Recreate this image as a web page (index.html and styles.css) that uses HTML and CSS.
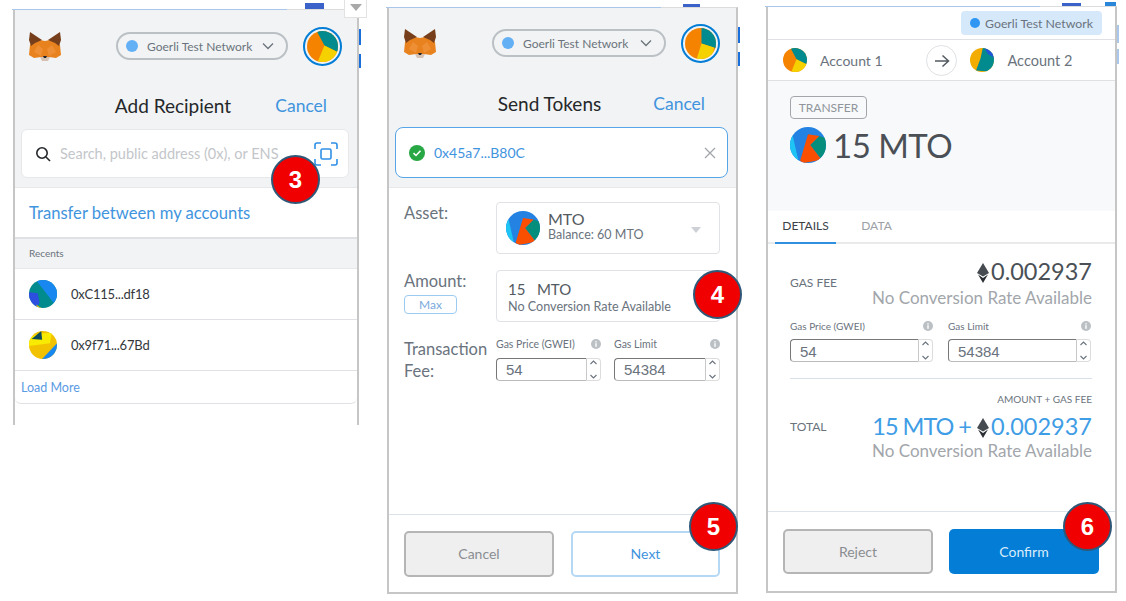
FILE: index.html
```html
<!DOCTYPE html>
<html>
<head>
	<title>MetaMask Send Steps</title>
	<link rel="stylesheet" href="styles.css">
</head>
<body>
	<svg class="defs" width="0" height="0">
		<symbol id="fox" viewBox="0 0 32 30">
			<polygon fill="#e8821e" points="1,14 6,8 16,10 26,8 31,14 32,24 27,27 20,26 12,26 5,27 0,24"/>
			<polygon fill="#763e1a" points="1,1 13,9 6,12 2,15 0,9"/>
			<polygon fill="#763e1a" points="31,1 19,9 26,12 30,15 32,9"/>
			<polygon fill="#ef8f35" points="9,14 14,18 12,25 5,21"/>
			<polygon fill="#ef8f35" points="23,14 18,18 20,25 27,21"/>
			<polygon fill="#d7c1b3" points="11,26 21,26 19,30 13,30"/>
			<polygon fill="#23262b" points="14,25 18,25 17,27 15,27"/>
		</symbol>
		<symbol id="chevron" viewBox="0 0 12 8">
			<path d="M1 1.5 L6 6.5 L11 1.5" fill="none" stroke="#6a737d" stroke-width="1.3"/>
		</symbol>
		<symbol id="pie-account" viewBox="0 0 32 32">
			<rect width="32" height="32" fill="#f58300"/>
			<polygon fill="#018b8e" points="10,0 32,0 32,22 18,15"/>
			<polygon fill="#f6d100" points="18,15 32,22 32,32 11,32"/>
		</symbol>
		<symbol id="pie-send" viewBox="0 0 32 32">
			<rect width="32" height="32" fill="#f58300"/>
			<polygon fill="#018b8e" points="17,0 32,0 32,21 17,16"/>
			<polygon fill="#f6d100" points="17,16 30,20 28,32 12,32"/>
		</symbol>
		<symbol id="pie-recent-a" viewBox="0 0 32 32">
			<rect width="32" height="32" fill="#018b8e"/>
			<polygon fill="#1888f0" points="8,0 32,0 32,24 28,26"/>
			<polygon fill="#2d4fe0" points="0,14 10,15 12,26 8,32 0,32"/>
			<polygon fill="#f2c200" points="0,0 8,0 0,10"/>
			<polygon fill="#f2c200" points="8,28 14,32 10,32"/>
		</symbol>
		<symbol id="pie-recent-b" viewBox="0 0 32 32">
			<rect width="32" height="32" fill="#f2c200"/>
			<polygon fill="#f8ea00" points="0,8 10,3 26,2 24,14 0,17"/>
			<polygon fill="#0f4a5a" points="3,9 14,0 15,10"/>
			<polygon fill="#1888f0" points="32,14 32,32 15,32"/>
		</symbol>
		<symbol id="pie-account-b" viewBox="0 0 32 32">
			<rect width="32" height="32" fill="#f2ad00"/>
			<polygon fill="#018b8e" points="17,0 32,0 32,32 8,30 14,14"/>
			<polygon fill="#1f55dc" points="19,0 32,0 32,13 24,8"/>
		</symbol>
		<symbol id="token" viewBox="0 0 32 32">
			<rect width="32" height="32" fill="#2382e2"/>
			<polygon fill="#1ec4f4" points="2,6 8,32 0,32 0,10"/>
			<polygon fill="#068e7c" points="18,16 26,8 32,10 32,32 28,29"/>
			<polygon fill="#fa4e00" points="16,6.5 26,8 18,16 28,29 12,32 9,30"/>
		</symbol>
		<symbol id="eth" viewBox="0 0 12 20">
			<polygon fill="#454b50" points="6,0 12,10 6,13.5 0,10"/>
			<polygon fill="#2b2f33" points="6,15 11,11.5 6,20 1,11.5"/>
		</symbol>
		<symbol id="info" viewBox="0 0 10 10">
			<circle cx="5" cy="5" r="5" fill="#bbc0c5"/>
			<rect x="4.3" y="4.2" width="1.4" height="3.6" fill="#fff"/>
			<rect x="4.3" y="2.2" width="1.4" height="1.3" fill="#fff"/>
		</symbol>
		<symbol id="spin" viewBox="0 0 9 21">
			<path d="M1.5 5 L4.5 2 L7.5 5 M1.5 16 L4.5 19 L7.5 16" fill="none" stroke="#6a737d" stroke-width="1.1"/>
		</symbol>
	</svg>

	<!-- page behind the popups -->
	<div class="scrap scrap-tag"></div>
	<div class="scrap scrap-side side-a"></div>
	<div class="scrap scrap-side side-b"></div>
	<div class="scrap scrap-tag tag-b"></div>
	<div class="scrap scrap-tag tag-c"></div>
	<div class="scrap scrap-tag tag-d"></div>
	<div class="scrap scrap-side side-c"></div>
	<div class="scrap-drop"><span></span></div>

	<!-- step 3 -->
	<section class="panel panel-recipient">
		<div class="top-area">
			<header class="app-bar">
				<svg class="fox"><use href="#fox"/></svg>
				<div class="network-pill">
					<span class="dot"></span>
					<span class="network-name">Goerli Test Network</span>
					<svg class="chevron"><use href="#chevron"/></svg>
				</div>
				<div class="avatar-ring"><svg class="pie"><use href="#pie-account"/></svg></div>
			</header>
			<div class="title-row">
				<h2>Add Recipient</h2>
				<a class="cancel-link">Cancel</a>
			</div>
			<div class="search-box">
				<svg class="search-icon" viewBox="0 0 16 16"><circle cx="7" cy="7" r="5.2" fill="none" stroke="#24272a" stroke-width="1.6"/><path d="M11 11 L15 15" stroke="#24272a" stroke-width="1.6"/></svg>
				<span class="search-text">Search, public address (0x), or ENS</span>
				<svg class="qr-icon" viewBox="0 0 24 24">
					<path d="M1 7 V3 a2 2 0 0 1 2 -2 H7 M17 1 H21 a2 2 0 0 1 2 2 V7 M23 17 V21 a2 2 0 0 1 -2 2 H17 M7 23 H3 a2 2 0 0 1 -2 -2 V17" fill="none" stroke="#2f8fe6" stroke-width="1.6"/>
					<rect x="7" y="7" width="10" height="10" rx="1.5" fill="none" stroke="#2f8fe6" stroke-width="1.6"/>
				</svg>
			</div>
		</div>
		<a class="transfer-link">Transfer between my accounts</a>
		<div class="recents-head">Recents</div>
		<div class="recent-row">
			<svg class="recent-pie"><use href="#pie-recent-a"/></svg>
			<span>0xC115...df18</span>
		</div>
		<div class="recent-row">
			<svg class="recent-pie"><use href="#pie-recent-b"/></svg>
			<span>0x9f71...67Bd</span>
		</div>
		<a class="load-more">Load More</a>
		<span class="badge badge-3">3</span>
	</section>

	<!-- steps 4 and 5 -->
	<section class="panel panel-send">
		<div class="top-area">
			<header class="app-bar">
				<svg class="fox"><use href="#fox"/></svg>
				<div class="network-pill">
					<span class="dot"></span>
					<span class="network-name">Goerli Test Network</span>
					<svg class="chevron"><use href="#chevron"/></svg>
				</div>
				<div class="avatar-ring"><svg class="pie"><use href="#pie-send"/></svg></div>
			</header>
			<div class="title-row">
				<h2>Send Tokens</h2>
				<a class="cancel-link">Cancel</a>
			</div>
			<div class="address-box">
				<svg class="check-icon" viewBox="0 0 16 16"><circle cx="8" cy="8" r="8" fill="#28a745"/><path d="M4.5 8.2 L7 10.5 L11.5 5.8" fill="none" stroke="#fff" stroke-width="1.6"/></svg>
				<span class="address-text">0x45a7...B80C</span>
				<svg class="close-icon" viewBox="0 0 12 12"><path d="M1 1 L11 11 M11 1 L1 11" stroke="#a2a6ab" stroke-width="1.3"/></svg>
			</div>
		</div>
		<div class="send-form">
			<div class="form-row">
				<label class="form-label">Asset:</label>
				<div class="field-box asset-box">
					<svg class="asset-icon"><use href="#token"/></svg>
					<div>
						<div class="asset-name">MTO</div>
						<div class="asset-balance">Balance: 60 MTO</div>
					</div>
					<span class="asset-caret"></span>
				</div>
			</div>
			<div class="form-row">
				<div>
					<label class="form-label">Amount:</label>
					<button class="max-button">Max</button>
				</div>
				<div class="field-box amount-box">
					<div class="amount-value">15&nbsp;&nbsp; MTO</div>
					<div class="amount-note">No Conversion Rate Available</div>
				</div>
			</div>
			<div class="form-row fee-row">
				<label class="form-label fee-label">Transaction Fee:</label>
				<div class="gas-fields">
					<div class="gas-field">
						<div class="gas-label"><span>Gas Price (GWEI)</span><svg class="info"><use href="#info"/></svg></div>
						<div class="gas-input"><span class="gas-value">54</span><span class="gas-spin"><svg><use href="#spin"/></svg></span></div>
					</div>
					<div class="gas-field">
						<div class="gas-label"><span>Gas Limit</span><svg class="info"><use href="#info"/></svg></div>
						<div class="gas-input"><span class="gas-value">54384</span><span class="gas-spin"><svg><use href="#spin"/></svg></span></div>
					</div>
				</div>
			</div>
		</div>
		<footer class="panel-footer">
			<button class="btn btn-grey">Cancel</button>
			<button class="btn btn-outline">Next</button>
		</footer>
		<span class="badge badge-4">4</span>
		<span class="badge badge-5">5</span>
	</section>

	<!-- step 6 -->
	<section class="panel panel-confirm">
		<div class="network-bar">
			<div class="network-chip"><span class="dot"></span>Goerli Test Network</div>
		</div>
		<div class="account-row">
			<div class="account account-from">
				<svg class="account-pie"><use href="#pie-account"/></svg>
				<span>Account 1</span>
			</div>
			<div class="account account-to">
				<svg class="account-pie"><use href="#pie-account-b"/></svg>
				<span>Account 2</span>
			</div>
			<div class="arrow-circle">
				<svg viewBox="0 0 16 14"><path d="M1 7 H14 M8.5 1.5 L14.5 7 L8.5 12.5" fill="none" stroke="#535a61" stroke-width="1.5"/></svg>
			</div>
		</div>
		<div class="summary">
			<span class="transfer-tag">TRANSFER</span>
			<div class="summary-amount">
				<svg class="summary-icon"><use href="#token"/></svg>
				<span>15 MTO</span>
			</div>
		</div>
		<nav class="tabs">
			<a class="tab tab-active">DETAILS</a>
			<a class="tab">DATA</a>
		</nav>
		<div class="details">
			<div class="detail-row gas-row">
				<span class="detail-label">GAS FEE</span>
				<div class="detail-values">
					<div class="detail-big"><svg class="eth"><use href="#eth"/></svg>0.002937</div>
					<div class="detail-note">No Conversion Rate Available</div>
				</div>
			</div>
			<div class="gas-fields confirm-gas">
				<div class="gas-field">
					<div class="gas-label"><span>Gas Price (GWEI)</span><svg class="info"><use href="#info"/></svg></div>
					<div class="gas-input"><span class="gas-value">54</span><span class="gas-spin"><svg><use href="#spin"/></svg></span></div>
				</div>
				<div class="gas-field">
					<div class="gas-label"><span>Gas Limit</span><svg class="info"><use href="#info"/></svg></div>
					<div class="gas-input"><span class="gas-value">54384</span><span class="gas-spin"><svg><use href="#spin"/></svg></span></div>
				</div>
			</div>
			<div class="total-head">AMOUNT + GAS FEE</div>
			<div class="detail-row total-row">
				<span class="detail-label">TOTAL</span>
				<div class="detail-values">
					<div class="detail-big detail-blue"><span class="total-token">15 MTO +</span> <svg class="eth"><use href="#eth"/></svg>0.002937</div>
					<div class="detail-note">No Conversion Rate Available</div>
				</div>
			</div>
		</div>
		<footer class="panel-footer confirm-footer">
			<button class="btn btn-grey">Reject</button>
			<button class="btn btn-blue">Confirm</button>
		</footer>
		<span class="badge badge-6">6</span>
	</section>
</body>
</html>
```

FILE: styles.css
```css
* {
  box-sizing: border-box;
}

body {
  margin: 0;
  height: 601px;
  overflow: hidden;
  background: #fff;
  font-family: "Lato", "Open Sans", sans-serif;
  color: #24272a;
  position: relative;
}

.defs {
  position: absolute;
}

/* bits of the browser page showing behind each popup */
.scrap {
  position: absolute;
  background: #1a6fdc;
}
.scrap-tag {
  left: 305px;
  top: 3px;
  width: 19px;
  height: 7px;
  background: #3a62c8;
}
.tag-b {
  left: 683px;
  top: 4px;
  height: 4px;
  width: 17px;
}
.tag-c {
  left: 1062px;
  top: 3px;
  height: 4px;
}
.tag-d {
  left: 1105px;
  top: 2px;
  width: 11px;
  height: 4px;
  background: #2a86d8;
}
.scrap-side {
  width: 3px;
  top: 29px;
  height: 39px;
  left: 358px;
  background: linear-gradient(#1a6fdc 40%, #fff 40%, #fff 65%, #1a6fdc 65%);
}
.side-b {
  left: 737px;
  top: 27px;
}
.side-c {
  left: 1116px;
  top: 25px;
  background: linear-gradient(#a9c7ea 45%, #fff 45%, #fff 62%, #a9c7ea 62%);
}
.scrap-drop {
  position: absolute;
  left: 344px;
  top: 0;
  width: 23px;
  height: 18px;
  background: #fff;
  border: 1px solid #e2e2e2;
  border-top: 0;
  z-index: 3;
}
.scrap-drop span {
  display: block;
  margin: 4px auto 0;
  width: 0;
  border-left: 6px solid transparent;
  border-right: 6px solid transparent;
  border-top: 7px solid #a9a9a9;
}

/* popup windows */
.panel {
  position: absolute;
  display: flex;
  flex-direction: column;
  background: #fff;
  border: 2px solid #c6c6c6;
  border-top: 1px solid #dcdcdc;
}
.panel::before {
  content: "";
  position: absolute;
  left: -3px;
  top: -1px;
  width: 275px;
  height: 1px;
  background: #a9c7ea;
}
.panel-recipient {
  left: 13px;
  top: 9px;
  width: 346px;
  height: 416px;
  border-bottom: 0;
}
.panel-send {
  left: 387px;
  top: 7px;
  width: 351px;
  height: 587px;
}
.panel-confirm {
  left: 766px;
  top: 6px;
  width: 351px;
  height: 587px;
}

.top-area {
  background: #f2f3f4;
  padding-bottom: 9px;
  border-bottom: 1px solid #e6e8ea;
}
.app-bar {
  height: 72px;
  display: flex;
  align-items: center;
  gap: 15px;
  padding: 0 15px 0 14px;
}
.fox {
  width: 32px;
  height: 30px;
  margin-right: auto;
}
.network-pill {
  width: 172px;
  height: 28px;
  display: flex;
  align-items: center;
  border: 2px solid #bbc0c5;
  border-radius: 14px;
  padding: 0 12px 0 8px;
  font-size: 12px;
  color: #6a737d;
}
.dot {
  width: 12px;
  height: 12px;
  border-radius: 50%;
  background: #64b0f5;
  flex: none;
}
.network-name {
  margin-left: 9px;
  flex: 1;
  white-space: nowrap;
}
.chevron {
  width: 12px;
  height: 8px;
}
.avatar-ring {
  width: 39px;
  height: 39px;
  flex: none;
  border: 2px solid #037dd6;
  border-radius: 50%;
  padding: 2px;
}
.pie {
  display: block;
  width: 31px;
  height: 31px;
  border-radius: 50%;
}

.title-row {
  height: 47px;
  display: flex;
  align-items: center;
  justify-content: center;
  position: relative;
  padding-right: 26px;
}
.title-row h2 {
  margin: 0;
  font-size: 19px;
  font-weight: 400;
  color: #24272a;
}
.cancel-link {
  position: absolute;
  right: 30px;
  top: 13px;
  font-size: 17.5px;
  color: #3f94de;
}

.search-box {
  margin: 0 8px 0 6px;
  height: 49px;
  background: #fff;
  border: 1px solid #e6e8ea;
  border-radius: 6px;
  display: flex;
  align-items: center;
  padding: 0 10px 0 13px;
}
.search-icon {
  width: 16px;
  height: 16px;
  flex: none;
}
.search-text {
  margin-left: 9px;
  font-size: 14.5px;
  color: #c3c6ca;
  flex: 1;
  white-space: nowrap;
}
.qr-icon {
  width: 24px;
  height: 24px;
  flex: none;
}

.transfer-link {
  height: 51px;
  padding: 15px 14px 0;
  font-size: 16.6px;
  color: #3f94de;
  border-bottom: 2px solid #dfe1e4;
}
.recents-head {
  height: 30px;
  padding: 8px 14px 0;
  background: #f2f3f4;
  border-bottom: 1px solid #e6e8ea;
  font-size: 10px;
  color: #6a737d;
}
.recent-row {
  height: 51px;
  display: flex;
  align-items: center;
  gap: 14px;
  padding-left: 14px;
  border-bottom: 1px solid #dfe1e4;
  font-size: 13px;
  letter-spacing: -0.2px;
  color: #33373b;
}
.recent-pie {
  width: 28px;
  height: 28px;
  border-radius: 50%;
  flex: none;
}
.load-more {
  height: 33px;
  padding: 9px 6px 0;
  font-size: 12.5px;
  color: #5a9be4;
  border-bottom: 1px solid #dfe1e4;
  border-radius: 0 0 6px 6px;
}

/* send form */
.panel-send .app-bar {
  height: 70px;
  padding: 0 16px 0 15px;
}
.panel-send .network-pill {
  width: 174px;
}
.panel-send .title-row {
  height: 49px;
}
.panel-send .title-row h2 {
  margin-top: 1px;
}
.panel-send .cancel-link {
  top: 15px;
  right: 31px;
}
.address-box {
  margin: 0 8px 0 6px;
  height: 51px;
  background: #fff;
  border: 1px solid #56a5e6;
  border-radius: 8px;
  display: flex;
  align-items: center;
  padding: 0 11px 0 13px;
}
.check-icon {
  width: 16px;
  height: 16px;
  flex: none;
}
.address-text {
  margin-left: 9px;
  flex: 1;
  font-size: 14px;
  color: #3f94de;
}
.close-icon {
  width: 12px;
  height: 12px;
}
.send-form {
  flex: 1;
  padding: 14px 15px 0;
}
.form-row {
  display: grid;
  grid-template-columns: 92px 224px;
  margin-bottom: 16px;
}
.form-label {
  display: block;
  font-size: 16.5px;
  padding-top: 1px;
  color: #6a737d;
}
.field-box {
  height: 52px;
  border: 1px solid #e0e2e5;
  border-radius: 4px;
}
.asset-box {
  display: flex;
  align-items: center;
  padding: 0 9px;
  position: relative;
}
.asset-icon {
  width: 34px;
  height: 34px;
  border-radius: 50%;
  margin-right: 8px;
  flex: none;
}
.asset-name {
  font-size: 16px;
  line-height: 16px;
  margin-top: -2px;
  color: #535a61;
}
.asset-balance {
  font-size: 12.5px;
  line-height: 16px;
  color: #6a737d;
}
.asset-caret {
  position: absolute;
  right: 18px;
  top: 24px;
  border-left: 5px solid transparent;
  border-right: 5px solid transparent;
  border-top: 6px solid #cdd1d5;
}
.max-button {
  display: block;
  margin-top: 4px;
  width: 53px;
  height: 19px;
  padding: 0;
  background: #fff;
  border: 1px solid #9ccbf2;
  border-radius: 4px;
  font: inherit;
  font-size: 12px;
  color: #7aa9dc;
}
.amount-box {
  padding: 9px 11px 0;
}
.amount-value {
  font-size: 15px;
  line-height: 18px;
  color: #535a61;
}
.amount-note {
  font-size: 12.6px;
  line-height: 18px;
  color: #6a737d;
}
.fee-row {
  margin-top: -2px;
}
.fee-label {
  line-height: 22px;
  padding-top: 2px;
  width: 92px;
}

.gas-fields {
  display: grid;
  grid-template-columns: 105px 106px;
  column-gap: 13px;
}
.gas-label {
  display: flex;
  justify-content: space-between;
  align-items: center;
  height: 15px;
  font-size: 10.5px;
  color: #6a737d;
  margin-bottom: 7px;
}
.info {
  width: 10px;
  height: 10px;
}
.gas-input {
  display: flex;
  height: 23px;
}
.gas-value {
  flex: 1;
  padding: 2px 0 0 9px;
  font-family: "Liberation Sans", sans-serif;
  font-size: 15px;
  color: #6a737d;
  border: 1px solid #bbb;
  border-left-color: #777;
  border-top-color: #777;
  border-right: 0;
  border-radius: 4px 0 0 4px;
}
.gas-spin {
  width: 15px;
  flex: none;
  border: 1px solid #dcdcdc;
  border-left: 1px solid #c9c9c9;
  border-radius: 0 4px 4px 0;
}
.gas-spin svg {
  display: block;
  width: 13px;
  height: 21px;
}

.panel-footer {
  height: 78px;
  border-top: 1px solid #dde3ea;
  display: grid;
  grid-template-columns: 150px 149px;
  column-gap: 17px;
  padding: 16px 0 0 15px;
}
.btn {
  height: 46px;
  padding: 0 0 2px;
  font: inherit;
  font-size: 14px;
  border-radius: 5px;
}
.btn-grey {
  background: #efefef;
  border: 2px solid #b5b5b5;
  color: #8a8d91;
}
.btn-outline {
  background: #fff;
  border: 2px solid #b5d8f4;
  color: #3f94de;
}
.btn-blue {
  background: #037dd6;
  border: 0;
  color: #d9ecfb;
}

/* confirm screen */
.network-bar {
  height: 33px;
  display: flex;
  justify-content: flex-end;
  padding: 4px 13px 0 0;
  border-bottom: 1px solid #dfe1e4;
}
.network-chip {
  width: 141px;
  height: 24px;
  background: #d6e9fb;
  border-radius: 4px;
  display: flex;
  align-items: center;
  gap: 5px;
  padding-left: 9px;
  font-size: 12.3px;
  color: #6a737d;
}
.network-chip .dot {
  width: 10px;
  height: 10px;
  background: #2f96f3;
}
.account-row {
  height: 41px;
  display: grid;
  grid-template-columns: 1fr 1fr;
  position: relative;
  border-bottom: 1px solid #dfe1e4;
  font-size: 14px;
  color: #6a737d;
}
.account {
  display: flex;
  align-items: center;
  gap: 13px;
}
.account-from {
  padding-left: 15px;
}
.account-to {
  padding-left: 28px;
  gap: 14px;
  font-size: 14.5px;
}
.account-pie {
  width: 24px;
  height: 24px;
  border-radius: 50%;
  flex: none;
}
.arrow-circle {
  position: absolute;
  left: 158px;
  top: 5px;
  width: 31px;
  height: 31px;
  border-radius: 50%;
  background: #fff;
  border: 1px solid #dfe1e4;
  display: flex;
  align-items: center;
  justify-content: center;
}
.arrow-circle svg {
  width: 16px;
  height: 14px;
}
.summary {
  height: 130px;
  background: #f8f9fa;
  padding: 15px 22px 0;
}
.transfer-tag {
  display: inline-block;
  height: 23px;
  width: 77px;
  border: 1px solid #a2a6ab;
  border-radius: 4px;
  text-align: center;
  font-size: 12px;
  line-height: 21px;
  color: #8f959b;
}
.summary-amount {
  display: flex;
  align-items: center;
  gap: 7px;
  margin-top: 8px;
  font-size: 33px;
  line-height: 36px;
  letter-spacing: -0.5px;
  color: #4a5056;
}
.summary-icon {
  width: 36px;
  height: 36px;
  border-radius: 50%;
  flex: none;
}
.tabs {
  height: 33px;
  display: flex;
  border-bottom: 2px solid #e8eaec;
  padding-left: 7px;
  font-size: 12px;
}
.tab {
  width: 61px;
  padding-top: 7px;
  text-align: center;
  color: #9ba1a6;
  margin-right: 10px;
}
.tab-active {
  height: 33px;
  color: #3c4146;
  border-bottom: 2px solid #2f8fe0;
}
.details {
  flex: 1;
  padding: 14px 23px 0 22px;
}
.detail-row {
  display: flex;
  justify-content: space-between;
}
.detail-label {
  font-size: 12px;
  color: #6a737d;
}
.gas-row .detail-label {
  padding-top: 17px;
}
.gas-row .detail-note {
  margin-top: 2px;
}
.detail-values {
  text-align: right;
}
.detail-big {
  font-size: 23.5px;
  line-height: 27px;
  color: #4a5056;
}
.detail-note {
  font-size: 17px;
  line-height: 22px;
  color: #a2a6ab;
}
.eth {
  width: 12px;
  height: 20px;
  vertical-align: -3px;
  margin-right: 2px;
}
.detail-blue {
  color: #3f9de6;
}
.total-token {
  letter-spacing: -1px;
}
.confirm-gas {
  grid-template-columns: 143px 143px;
  column-gap: 15px;
  margin-top: 9px;
  padding-bottom: 16px;
  border-bottom: 1px solid #d8e1ea;
}
.confirm-gas .gas-label {
  margin-bottom: 6px;
  font-size: 10px;
}
.confirm-gas .gas-value {
  padding-top: 3px;
}
.total-head {
  margin-top: 14px;
  text-align: right;
  font-size: 10px;
  color: #6a737d;
}
.total-row {
  margin-top: 8px;
}
.total-row .detail-label {
  padding-top: 6px;
}
.confirm-footer {
  height: 80px;
  padding: 17px 0 0 15px;
  grid-template-columns: 150px 150px;
  column-gap: 16px;
}
.confirm-footer .btn {
  height: 45px;
  padding: 0;
}

/* step markers */
.badge {
  position: absolute;
  width: 49px;
  height: 49px;
  border-radius: 50%;
  background: #f00000;
  border: 2px solid #2f5878;
  color: #fff;
  font-family: "Liberation Sans", sans-serif;
  font-weight: 700;
  font-size: 24px;
  line-height: 45px;
  text-align: center;
}
.badge-3 {
  left: 256px;
  top: 145px;
}
.badge-4 {
  left: 304px;
  top: 262px;
}
.badge-5 {
  left: 300px;
  top: 494px;
}
.badge-6 {
  left: 295px;
  top: 495px;
}
```
